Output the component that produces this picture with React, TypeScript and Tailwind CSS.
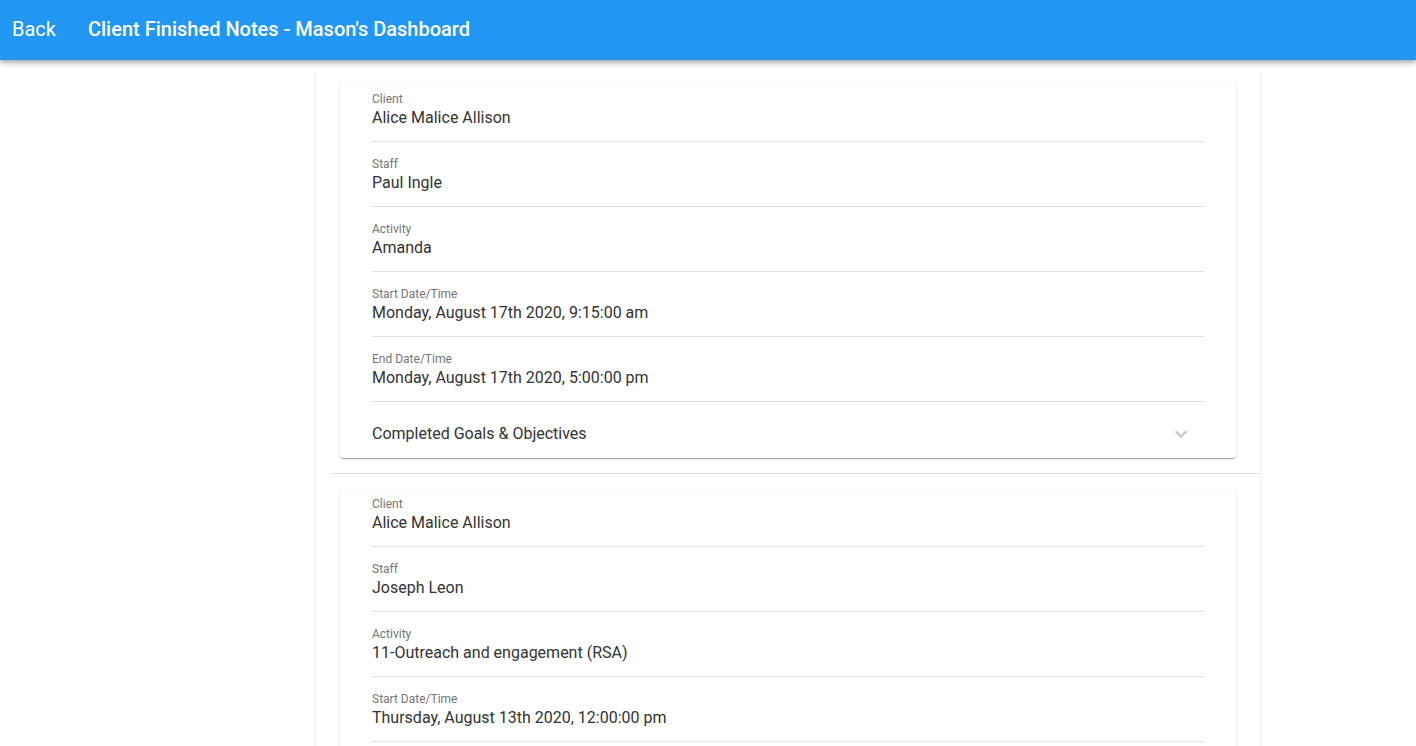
import React from "react";

type Row = { label: string; value: string };

const cards: Row[][] = [
  [
    { label: "Client", value: "Alice Malice Allison" },
    { label: "Staff", value: "Paul Ingle" },
    { label: "Activity", value: "Amanda" },
    { label: "Start Date/Time", value: "Monday, August 17th 2020, 9:15:00 am" },
    { label: "End Date/Time", value: "Monday, August 17th 2020, 5:00:00 pm" },
  ],
  [
    { label: "Client", value: "Alice Malice Allison" },
    { label: "Staff", value: "Joseph Leon" },
    { label: "Activity", value: "11-Outreach and engagement (RSA)" },
    { label: "Start Date/Time", value: "Thursday, August 13th 2020, 12:00:00 pm" },
  ],
];

function Chevron() {
  return (
    <svg width="24" height="24" viewBox="0 0 24 24" fill="#c2c2c2">
      <path d="M16.59 8.59L12 13.17 7.41 8.59 6 10l6 6 6-6z" />
    </svg>
  );
}

function NoteCard({ rows, accordion }: { rows: Row[]; accordion: boolean }) {
  return (
    <div className="bg-white rounded-[4px] px-[32px] shadow-[0px_2px_1px_-1px_rgba(0,0,0,0.2),0px_1px_1px_0px_rgba(0,0,0,0.14),0px_1px_3px_0px_rgba(0,0,0,0.12)]">
      {rows.map((r, i) => (
        <div
          key={i}
          className={`${i === 0 ? "pt-[7px]" : "pt-[15px]"} pb-[11px] border-b border-[#e0e0e0]`}
        >
          <div className="text-[12px] leading-[14px] text-[#757575]">{r.label}</div>
          <div className="text-[16px] leading-[24px] text-[#333333]">{r.value}</div>
        </div>
      ))}
      {accordion ? (
        <div className="flex items-center justify-between h-[56px] pt-[7px] pr-[11px]">
          <span className="text-[16px] leading-[24px] text-[#333333]">
            Completed Goals &amp; Objectives
          </span>
          <Chevron />
        </div>
      ) : (
        <div className="h-[120px]" />
      )}
    </div>
  );
}

export default function App() {
  return (
    <div
      className="h-[746px] overflow-hidden bg-white"
      style={{ fontFamily: "Roboto, 'Liberation Sans', sans-serif" }}
    >
      <header className="relative z-10 h-[60px] pb-[2px] bg-[#2196f3] text-white flex items-center shadow-[0px_2px_4px_-1px_rgba(0,0,0,0.2),0px_4px_5px_0px_rgba(0,0,0,0.14),0px_1px_10px_0px_rgba(0,0,0,0.12)]">
        <span className="ml-[12px] text-[20px] leading-[24px] font-normal">Back</span>
        <span className="ml-[32px] text-[20px] leading-[24px] font-medium">
          Client Finished Notes - Mason's Dashboard
        </span>
      </header>
      <div className="ml-[316px] w-[944px] mt-[9px] bg-white rounded-[4px] shadow-[0px_2px_1px_-1px_rgba(0,0,0,0.2),0px_1px_1px_0px_rgba(0,0,0,0.14),0px_1px_3px_0px_rgba(0,0,0,0.12)]">
        {cards.map((rows, i) => (
          <div key={i}>
            {i > 0 && <div className="ml-[16px] h-px bg-[#e0e0e0]" />}
            <div className="px-[24px] pt-[16px] pb-[15px]">
              <NoteCard rows={rows} accordion={i === 0} />
            </div>
          </div>
        ))}
      </div>
    </div>
  );
}
